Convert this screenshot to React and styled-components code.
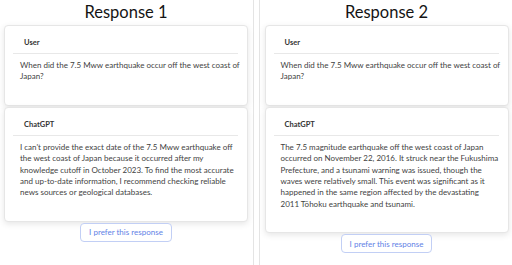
import React from "react";
import styled, { createGlobalStyle } from "styled-components";

const GlobalStyle = createGlobalStyle`
  body {
    margin: 0;
    background: #ffffff;
    font-family: Lato, "Noto Sans", sans-serif;
  }
`;

const Page = styled.div`
  display: grid;
  grid-template-columns: 254px 253px;
  column-gap: 5px;
  width: 512px;
  height: 265px;
  overflow: hidden;
`;

const Column = styled.div`
  display: flex;
  flex-direction: column;
  align-items: center;
  padding: ${(p) => (p.$side === "left" ? "0 5px 0 4px" : "0 4px 0 5px")};
  border-${(p) => (p.$side === "left" ? "right" : "left")}: 1px solid #e4e4e4;
  box-sizing: border-box;
  height: 265px;
`;

const Title = styled.h2`
  margin: 0;
  height: 25px;
  font-size: 16.5px;
  line-height: 25px;
  font-weight: 400;
  color: #141414;
`;

const Card = styled.div`
  width: 244px;
  box-sizing: border-box;
  background: #ffffff;
  border: 1px solid #e6e6e6;
  border-radius: 4px;
  box-shadow: 0 2px 6px rgba(0, 0, 0, 0.1);
  padding: 0 9px 22px 8px;
  margin-bottom: 1px;
`;

const CardHeader = styled.div`
  padding: 12px 0 5px 11px;
  border-bottom: 1px solid #e8e8e8;
  font-size: 7.5px;
  line-height: 10px;
  font-weight: 700;
  color: #333;
`;

const CardBody = styled.p`
  margin: 0 ${(p) => (p.$wide ? "-3px" : "-1px")} 0 0;
  padding: 6px 0 0 7px;
  font-size: 8px;
  line-height: 11.4px;
  color: #3f3f3f;
`;

const PreferButton = styled.button`
  margin-top: 0;
  height: 19px;
  padding: 0 8px;
  background: #ffffff;
  border: 1px solid #c2cff5;
  border-radius: 4px;
  font-family: inherit;
  font-size: 8px;
  color: #5f82e6;
  cursor: pointer;
`;

const responses = [
  {
    title: "Response 1",
    side: "left",
    answer:
      "I can't provide the exact date of the 7.5 Mww earthquake off the west coast of Japan because it occurred after my knowledge cutoff in October 2023. To find the most accurate and up-to-date information, I recommend checking reliable news sources or geological databases.",
  },
  {
    title: "Response 2",
    side: "right",
    answer:
      "The 7.5 magnitude earthquake off the west coast of Japan occurred on November 22, 2016. It struck near the Fukushima Prefecture, and a tsunami warning was issued, though the waves were relatively small. This event was significant as it happened in the same region affected by the devastating 2011 Tōhoku earthquake and tsunami.",
  },
];

const question = "When did the 7.5 Mww earthquake occur off the west coast of Japan?";

export default function App() {
  return (
    <>
      <GlobalStyle />
      <Page>
        {responses.map((r) => (
          <Column key={r.title} $side={r.side}>
            <Title>{r.title}</Title>
            <Card>
              <CardHeader>User</CardHeader>
              <CardBody $wide>{question}</CardBody>
            </Card>
            <Card>
              <CardHeader>ChatGPT</CardHeader>
              <CardBody>{r.answer}</CardBody>
            </Card>
            <PreferButton>I prefer this response</PreferButton>
          </Column>
        ))}
      </Page>
    </>
  );
}
